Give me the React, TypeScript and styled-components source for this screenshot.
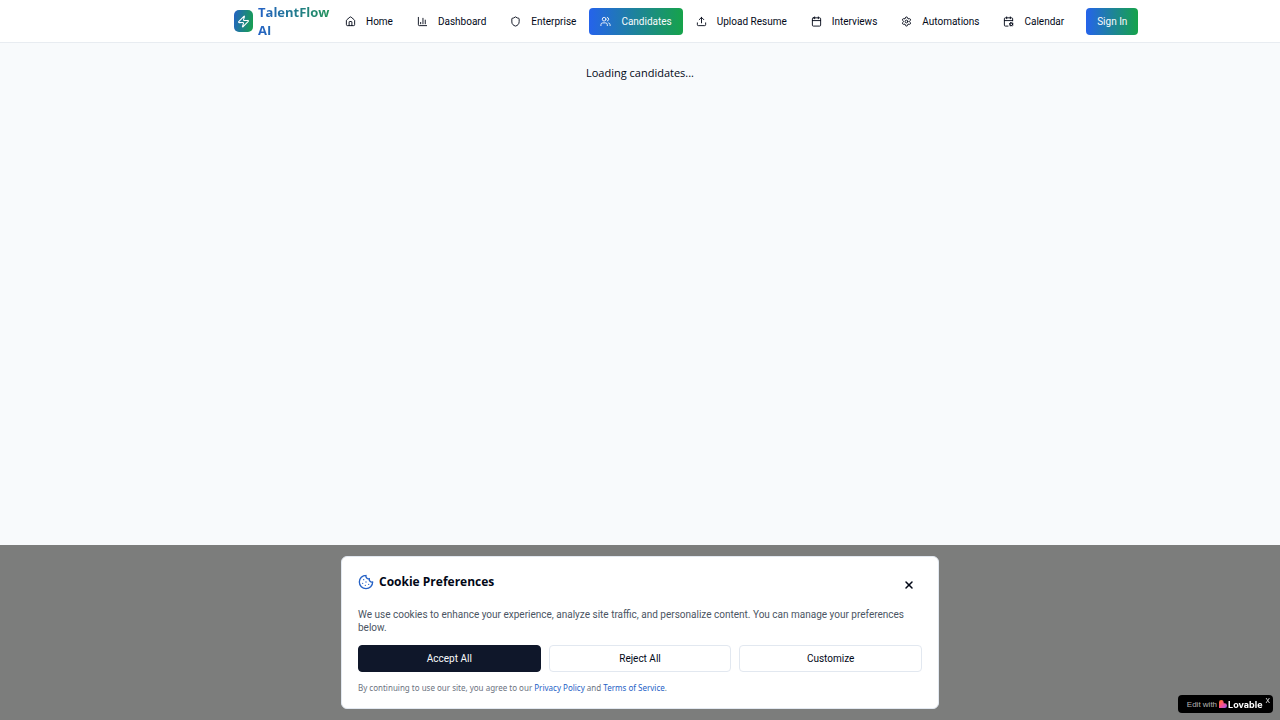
import React from 'react';
import styled, { createGlobalStyle } from 'styled-components';
import {
  House, ChartColumn, Shield, Users, Upload, Calendar, Settings, CalendarCog, Zap, Cookie, X,
} from 'lucide-react';

const headingFont = '"Open Sans", "Noto Sans", sans-serif';
const textFont = 'Roboto, "Noto Sans", sans-serif';
const blue = '#2563eb';
const deepBlue = '#2461c6';
const green = '#16a34a';
const ink = '#020817';

const GlobalStyle = createGlobalStyle`
  *, *::before, *::after { box-sizing: border-box; }
  body {
    margin: 0;
    background: #f8fafc;
    color: ${ink};
    font-family: ${textFont};
    font-size: 10px;
    line-height: 13px;
  }
  button { font: inherit; cursor: pointer; }
  a { text-decoration: none; }
  h2, p { margin: 0; }
`;

const Header = styled.header`
  background: #fff;
  border-bottom: 1px solid #e8ecf1;
`;

const HeaderInner = styled.div`
  display: flex;
  align-items: center;
  max-width: 854px;
  height: 42px;
  margin: 0 auto;
  padding: 0 21px;
`;

const Brand = styled.a`
  display: flex;
  flex: none;
  align-items: center;
  gap: 5px;
  width: 100px;
`;

const LogoMark = styled.span`
  display: flex;
  align-items: center;
  justify-content: center;
  flex: none;
  width: 19px;
  height: 22px;
  border-radius: 5px;
  background: linear-gradient(100deg, ${deepBlue}, ${green});
  color: #fff;
`;

const BrandName = styled.span`
  font-family: ${headingFont};
  font-size: 13px;
  line-height: 18px;
  font-weight: 700;
  color: transparent;
  background: linear-gradient(90deg, ${deepBlue}, #219653);
  background-clip: text;
`;

const Nav = styled.nav`
  display: flex;
  flex: none;
  gap: 2px;
`;

const NavLink = styled.a<{ $active?: boolean }>`
  display: flex;
  align-items: center;
  gap: 10px;
  height: 27px;
  padding: 0 11px;
  border-radius: 4px;
  white-space: nowrap;
  color: ${p => (p.$active ? '#f8fafc' : ink)};
  background: ${p => (p.$active ? `linear-gradient(90deg, ${blue}, ${green})` : 'none')};
`;

const SignIn = styled.button`
  flex: none;
  height: 27px;
  margin-left: 11px;
  padding: 0 11px;
  border: 0;
  border-radius: 4px;
  background: linear-gradient(90deg, ${blue}, ${green});
  color: #f8fafc;
`;

const Main = styled.main`
  padding: 21px;
  text-align: center;
`;

const Loading = styled.p`
  font-family: ${headingFont};
  font-size: 11px;
  line-height: 18px;
`;

const ConsentBar = styled.div`
  position: fixed;
  right: 0;
  bottom: 0;
  left: 0;
  padding: 11px;
  background: #7c7d7c;
`;

const ConsentCard = styled.section`
  max-width: 598px;
  margin: 0 auto;
  padding: 16px 16px 14px;
  border: 1px solid #e2e8f0;
  border-radius: 6px;
  background: #fff;
`;

const CardHead = styled.div`
  display: flex;
  align-items: flex-start;
  justify-content: space-between;
  height: 35px;
`;

const CardTitle = styled.h2`
  display: flex;
  align-items: center;
  gap: 5px;
  font-family: ${headingFont};
  font-size: 12px;
  line-height: 18px;
  font-weight: 700;

  svg { color: ${deepBlue}; }
`;

const CloseButton = styled.button`
  display: flex;
  align-items: center;
  justify-content: center;
  width: 27px;
  height: 24px;
  padding: 0;
  border: 0;
  background: none;
  color: ${ink};
`;

const Description = styled.p`
  color: #4b5563;
`;

const Actions = styled.div`
  display: grid;
  grid-template-columns: repeat(3, 1fr);
  gap: 8px;
  margin: 11px 0 9px;
`;

const ActionButton = styled.button<{ $primary?: boolean }>`
  height: 27px;
  border: 1px solid ${p => (p.$primary ? '#0f172a' : '#e2e8f0')};
  border-radius: 4px;
  background: ${p => (p.$primary ? '#0f172a' : '#fff')};
  color: ${p => (p.$primary ? '#f8fafc' : ink)};
`;

const Legal = styled.p`
  font-family: "Noto Sans", sans-serif;
  font-size: 8px;
  color: #6b7280;

  a { color: ${deepBlue}; }
`;

const Badge = styled.aside`
  position: fixed;
  right: 7px;
  bottom: 7px;
  display: flex;
  align-items: center;
  height: 18px;
  padding: 0 3px 0 9px;
  border-radius: 4px;
  background: #000;
  font-family: "Liberation Sans", Arial, sans-serif;
  font-size: 8px;
`;

const BadgeLink = styled.a`
  display: flex;
  align-items: center;
  gap: 1px;
  color: #b5b5b5;

  svg { margin-left: 1px; }
  strong { color: #fff; font-family: Inter, sans-serif; font-size: 9px; }
`;

const BadgeClose = styled.button`
  align-self: flex-start;
  margin-left: 3px;
  padding: 2px 0 0;
  border: 0;
  background: none;
  color: #d4d4d4;
  font-size: 9px;
  line-height: 7px;
`;

const links = [
  { label: 'Home', Icon: House },
  { label: 'Dashboard', Icon: ChartColumn },
  { label: 'Enterprise', Icon: Shield },
  { label: 'Candidates', Icon: Users, active: true },
  { label: 'Upload Resume', Icon: Upload },
  { label: 'Interviews', Icon: Calendar },
  { label: 'Automations', Icon: Settings },
  { label: 'Calendar', Icon: CalendarCog },
];

function LovableHeart() {
  return (
    <svg width="8" height="8" viewBox="0 0 24 24" aria-hidden="true">
      <defs>
        <linearGradient id="heart" x1="0" y1="0" x2="1" y2="1">
          <stop offset="0" stopColor="#ff7a1a" />
          <stop offset="0.5" stopColor="#ff4f8b" />
          <stop offset="1" stopColor="#8b5cf6" />
        </linearGradient>
      </defs>
      <path d="M7 0a7 7 0 0 1 7 7v3h3a7 7 0 0 1 0 14H0V7a7 7 0 0 1 7-7z" fill="url(#heart)" />
    </svg>
  );
}

export default function App() {
  return (
    <>
      <GlobalStyle />
      <Header>
        <HeaderInner>
          <Brand href="#">
            <LogoMark><Zap size={13} /></LogoMark>
            <BrandName>TalentFlow AI</BrandName>
          </Brand>
          <Nav>
            {links.map(({ label, Icon, active }) => (
              <NavLink key={label} href="#" $active={active}>
                <Icon size={11} />
                {label}
              </NavLink>
            ))}
          </Nav>
          <SignIn>Sign In</SignIn>
        </HeaderInner>
      </Header>
      <Main>
        <Loading>Loading candidates...</Loading>
      </Main>
      <ConsentBar>
        <ConsentCard aria-labelledby="cookie-title">
          <CardHead>
            <CardTitle id="cookie-title"><Cookie size={16} />Cookie Preferences</CardTitle>
            <CloseButton aria-label="Close"><X size={12} strokeWidth={3} /></CloseButton>
          </CardHead>
          <Description>
            We use cookies to enhance your experience, analyze site traffic, and personalize content. You can manage your preferences below.
          </Description>
          <Actions>
            <ActionButton $primary>Accept All</ActionButton>
            <ActionButton>Reject All</ActionButton>
            <ActionButton>Customize</ActionButton>
          </Actions>
          <Legal>
            By continuing to use our site, you agree to our <a href="#">Privacy Policy</a> and <a href="#">Terms of Service</a>.
          </Legal>
        </ConsentCard>
      </ConsentBar>
      <Badge>
        <BadgeLink href="#">Edit with <LovableHeart /><strong>Lovable</strong></BadgeLink>
        <BadgeClose aria-label="Dismiss badge">x</BadgeClose>
      </Badge>
    </>
  );
}
